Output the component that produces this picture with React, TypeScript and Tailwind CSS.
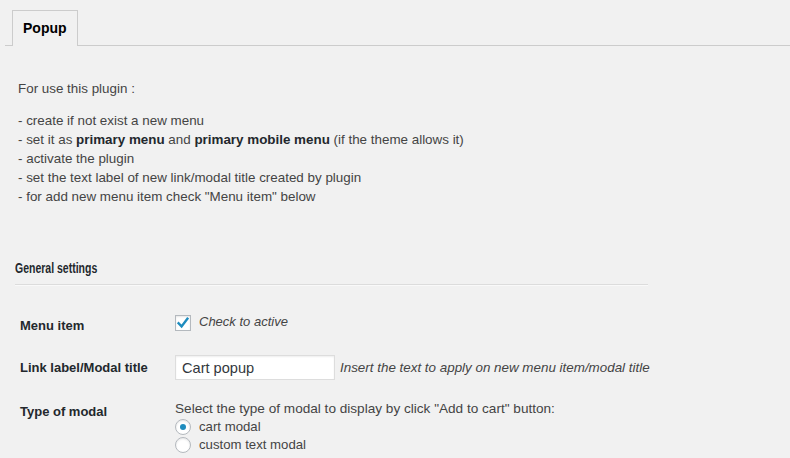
import React from "react";

function Checkbox() {
  return (
    <span className="flex h-[16px] w-[16px] shrink-0 items-center justify-center border border-[#b4b9be] bg-white shadow-[inset_0_1px_2px_rgba(0,0,0,0.1)]">
      <svg width="14" height="14" viewBox="0 0 14 14">
        <path d="M2.6 7.2l3 3.2 5.8-7.6" fill="none" stroke="#1e8cbe" strokeWidth="2.4" strokeLinecap="square" strokeLinejoin="miter" />
      </svg>
    </span>
  );
}

function Radio({ checked }: { checked?: boolean }) {
  return (
    <span className="flex h-[16px] w-[16px] shrink-0 items-center justify-center rounded-full border border-[#b4b9be] bg-white shadow-[inset_0_1px_2px_rgba(0,0,0,0.1)]">
      {checked ? <span className="h-[6px] w-[6px] rounded-full bg-[#1e8cbe]" /> : null}
    </span>
  );
}

export default function App() {
  return (
    <div className="min-h-[458px] bg-[#f1f1f1] font-['Liberation_Sans',Arial,sans-serif] text-[13px] text-[#444]">
      <div className="ml-[5px] flex border-b border-[#ccc] pl-[7px] pt-[10px]">
        <div className="-mb-px flex h-[36px] items-center border border-b-0 border-[#ccc] bg-[#f1f1f1] px-[10px] text-[14px] font-bold text-[#000]">
          Popup
        </div>
      </div>
      <div className="pl-[15px]">
        <p className="pl-[3px] pt-[33px] text-[13.4px] leading-[19px]">For use this plugin :</p>
        <p className="mt-[13px] pl-[3px] text-[13.4px] leading-[19px]">
          - create if not exist a new menu
          <br />- set it as <b className="text-[#23282d]">primary menu</b> and{" "}
          <b className="text-[#23282d]">primary mobile menu</b> (if the theme allows it)
          <br />- activate the plugin
          <br />- set the text label of new link/modal title created by plugin
          <br />- for add new menu item check "Menu item" below
        </p>
        <h2 className="mt-[52px] h-[20px] text-[14px] font-bold leading-[20px] text-[#23282d]">
          <span className="inline-block origin-left scale-x-[0.75] whitespace-nowrap">General settings</span>
        </h2>
        <div className="mt-[6px] w-[633px] border-t border-[#dcdcdc] border-b border-b-[#f9f9f9]" />
        <div className="mt-[29px] flex items-start pl-[5px]">
          <div className="mt-[1px] w-[155px] font-bold leading-[19px] text-[#23282d]">Menu item</div>
          <div className="flex items-start gap-[8px]">
            <Checkbox />
            <span className="italic leading-[14px]">Check to active</span>
          </div>
        </div>
        <div className="mt-[20px] flex items-center pl-[5px]">
          <div className="w-[155px] font-bold leading-[19px] text-[#23282d]">Link label/Modal title</div>
          <div className="flex items-center">
            <input
              readOnly
              value="Cart popup"
              className="h-[25px] w-[160px] border border-[#ddd] bg-white px-[6px] text-[14.6px] text-[#32373c] shadow-[inset_0_1px_2px_rgba(0,0,0,0.07)] outline-none"
            />
            <span className="ml-[5px] text-[13.4px] italic leading-[19px]">Insert the text to apply on new menu item/modal title</span>
          </div>
        </div>
        <div className="mt-[20px] flex items-start pl-[5px]">
          <div className="mt-[2px] w-[155px] font-bold leading-[19px] text-[#23282d]">Type of modal</div>
          <div className="flex flex-col">
            <div className="text-[13.6px] leading-[18px]">Select the type of modal to display by click "Add to cart" button:</div>
            <div className="flex h-[18px] items-center gap-[8px] text-[13.2px]">
              <Radio checked />
              <span>cart modal</span>
            </div>
            <div className="flex h-[18px] items-center gap-[8px] text-[13.2px]">
              <Radio />
              <span>custom text modal</span>
            </div>
          </div>
        </div>
      </div>
    </div>
  );
}
